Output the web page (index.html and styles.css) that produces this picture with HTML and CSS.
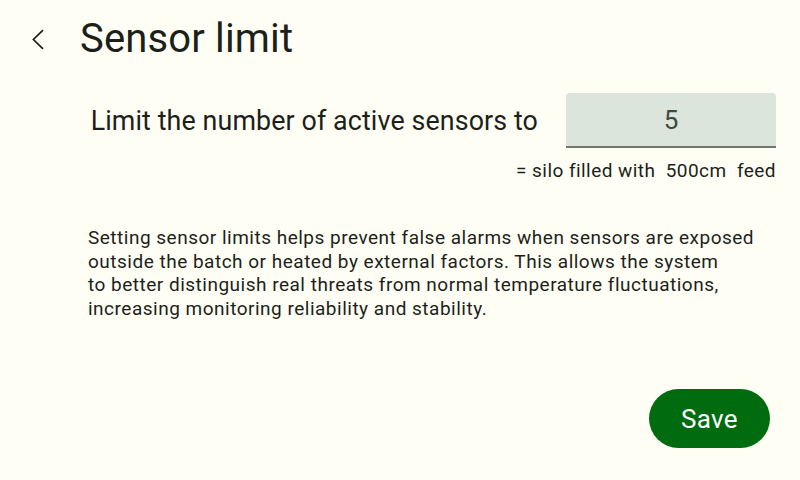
FILE: index.html
```html
<!DOCTYPE html>
<html>
<head>
<meta charset="utf-8">
<link rel="stylesheet" href="styles.css">
</head>
<body>
<div class="page">
  <header class="header">
    <button class="back" aria-label="Back">
      <svg width="24" height="24" viewBox="0 0 24 24"><path d="M17 3.2 7.4 12.5 17 21.8" fill="none" stroke="#1d1f1b" stroke-width="1.7"/></svg>
    </button>
    <h1 class="title">Sensor limit</h1>
  </header>
  <section class="limit">
    <div class="limit-row">
      <span class="limit-label">Limit the number of active sensors to</span>
      <div class="field"><span class="field-value">5</span></div>
    </div>
    <div class="hint">= silo filled with&nbsp; 500cm&nbsp; feed</div>
  </section>
  <p class="desc">Setting sensor limits helps prevent false alarms when sensors are exposed outside the batch or heated by external factors. This allows the system<br>to better distinguish real threats from normal temperature fluctuations, increasing monitoring reliability and stability.</p>
  <div class="actions">
    <button class="save">Save</button>
  </div>
</div>
</body>
</html>
```
FILE: styles.css
```css
html, body {
  margin: 0;
  padding: 0;
  width: 800px;
  height: 480px;
  background: #fefef5;
  font-family: Roboto, "Noto Sans", sans-serif;
  color: #1d1f1b;
  overflow: hidden;
}
.page {
  display: flex;
  flex-direction: column;
  height: 480px;
  box-sizing: border-box;
}
.header {
  display: flex;
  align-items: center;
  height: 78px;
  padding-left: 26px;
}
.back {
  width: 24px;
  height: 24px;
  padding: 0;
  border: none;
  background: none;
  display: flex;
}
.title {
  margin: 0 0 0 30px;
  font-size: 40px;
  font-weight: 400;
  line-height: 44px;
  letter-spacing: 0.15px;
}
.limit {
  display: flex;
  flex-direction: column;
  align-items: flex-end;
  padding-right: 24px;
  margin-top: 15px;
}
.limit-row {
  display: flex;
  align-items: center;
  gap: 28px;
}
.limit-label {
  font-size: 26.8px;
  letter-spacing: 0.12px;
}
.field {
  width: 210px;
  height: 53px;
  background: #dce5dc;
  border-bottom: 2px solid #717970;
  border-radius: 4px 4px 0 0;
  display: flex;
  align-items: center;
  justify-content: center;
}
.field-value {
  font-size: 26px;
  color: #40493f;
}
.hint {
  font-size: 19px;
  line-height: 22px;
  margin-top: 12px;
  letter-spacing: 0.45px;
}
.desc {
  margin: 44px 0 0 88px;
  width: 700px;
  font-size: 19px;
  line-height: 23.5px;
  letter-spacing: 0.5px;
}
.actions {
  display: flex;
  justify-content: flex-end;
  padding-right: 30px;
  margin-top: auto;
  margin-bottom: 32px;
}
.save {
  width: 121px;
  height: 59px;
  border: none;
  border-radius: 30px;
  background: #006b0f;
  color: #ffffff;
  font-family: Roboto, sans-serif;
  font-size: 26px;
  letter-spacing: 0.3px;
}
```
